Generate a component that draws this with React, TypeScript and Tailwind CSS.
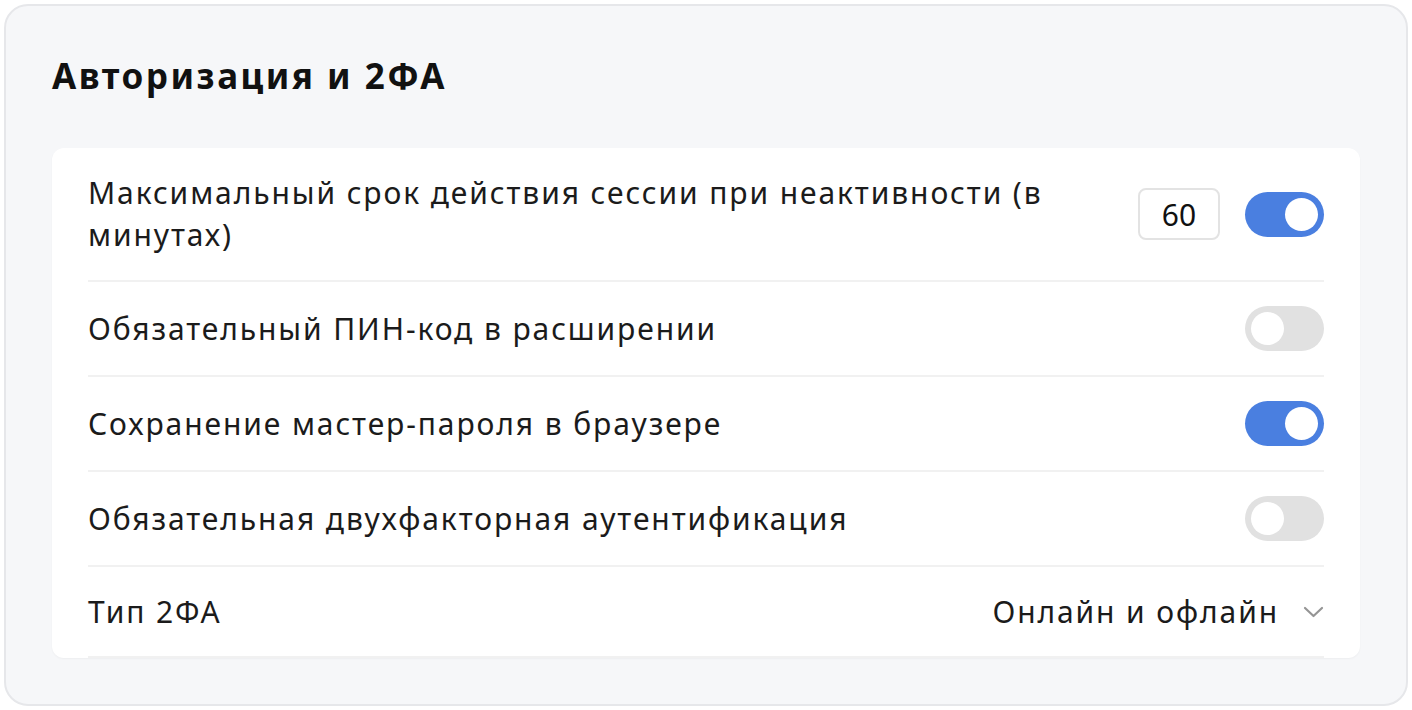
import React, { useState } from 'react';

function Toggle({ on, onChange }: { on: boolean; onChange: () => void }) {
  return (
    <button
      onClick={onChange}
      className={`relative h-[45px] w-[79px] shrink-0 rounded-full transition-colors ${on ? 'bg-[#4a7fe0]' : 'bg-[#e1e1e1]'}`}
    >
      <span
        className={`absolute top-[6px] h-[33px] w-[33px] rounded-full bg-white transition-all ${on ? 'left-[40px]' : 'left-[6px]'}`}
      />
    </button>
  );
}

function Row({ children, label, last }: { children?: React.ReactNode; label: React.ReactNode; last?: boolean }) {
  return (
    <div className={`flex items-center justify-between gap-6 border-b-2 border-[#f1f1f1] ${last ? 'py-[22px]' : 'py-[24px]'}`}>
      <div className="flex-1 text-[30px] leading-[42px] tracking-[1.9px] text-[#1b1b1b]">{label}</div>
      <div className="flex items-center gap-[25px]">{children}</div>
    </div>
  );
}

export default function App() {
  const [session, setSession] = useState(true);
  const [pin, setPin] = useState(false);
  const [master, setMaster] = useState(true);
  const [twoFa, setTwoFa] = useState(false);
  const [minutes, setMinutes] = useState('60');

  return (
    <div className="h-[710px] w-[1412px] bg-white p-1" style={{ fontFamily: '"Noto Sans", "Open Sans", sans-serif' }}>
      <div className="h-full rounded-[24px] border-2 border-[#e6e7ea] bg-[#f6f7f9] px-[46px] pt-[44px]">
        <h1 className="text-[35px] font-bold leading-[52px] tracking-[2.5px] text-[#111]">Авторизация и 2ФА</h1>
        <div className="mt-[46px] rounded-[12px] bg-white px-[36px] shadow-[0_1px_2px_rgba(0,0,0,0.04)]">
          <Row label="Максимальный срок действия сессии при неактивности (в минутах)">
            <input
              value={minutes}
              onChange={(e) => setMinutes(e.target.value)}
              className="h-[52px] w-[82px] rounded-[8px] border-2 border-[#e3e3e3] text-center text-[30px] text-[#111] outline-none"
            />
            <Toggle on={session} onChange={() => setSession(!session)} />
          </Row>
          <Row label="Обязательный ПИН-код в расширении">
            <Toggle on={pin} onChange={() => setPin(!pin)} />
          </Row>
          <Row label="Сохранение мастер-пароля в браузере">
            <Toggle on={master} onChange={() => setMaster(!master)} />
          </Row>
          <Row label="Обязательная двухфакторная аутентификация">
            <Toggle on={twoFa} onChange={() => setTwoFa(!twoFa)} />
          </Row>
          <Row label="Тип 2ФА" last>
            <button className="flex h-[45px] items-center gap-[24px] text-[30px] tracking-[1.9px] text-[#1b1b1b]">
              Онлайн и офлайн
              <svg width="21" height="14" viewBox="0 0 21 14" fill="none">
                <path d="M2 3l8.5 8 8.5-8" stroke="#959595" strokeWidth="2.2" strokeLinecap="round" strokeLinejoin="round" />
              </svg>
            </button>
          </Row>
        </div>
      </div>
    </div>
  );
}
